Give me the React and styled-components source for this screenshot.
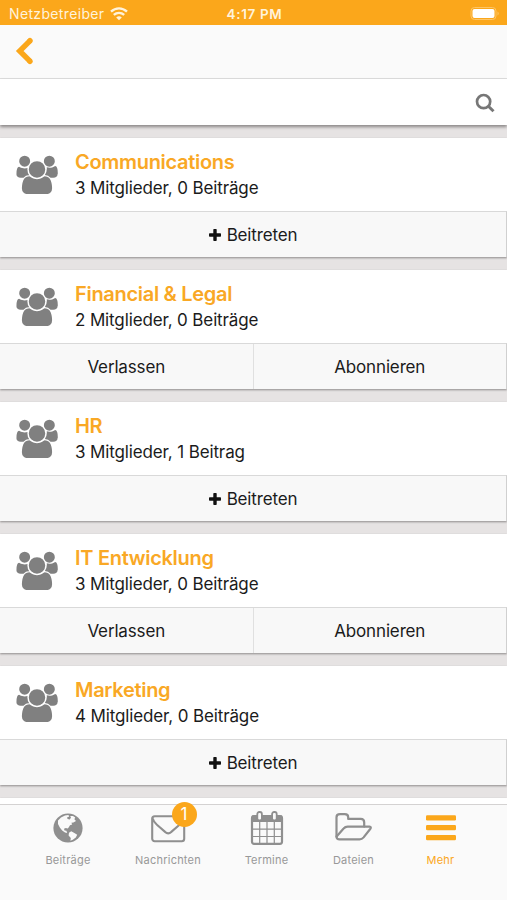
import React from "react";
import styled, { createGlobalStyle } from "styled-components";

const GlobalStyle = createGlobalStyle`
  * {
    box-sizing: border-box;
  }

  body {
    margin: 0;
    font-family: Inter, sans-serif;
    color: #1b1b1b;
    background-color: #e8e6e6;
  }
`;

const Screen = styled.div`
  width: 507px;
  height: 900px;
  display: flex;
  flex-direction: column;
  overflow: hidden;
  background-color: #e6e3e3;
`;

const StatusBar = styled.div`
  height: 25px;
  flex-shrink: 0;
  display: grid;
  grid-template-columns: 1fr auto 1fr;
  align-items: center;
  padding: 2px 7px 0 9px;
  color: #fff3dc;
  background-color: #fba71b;
`;

const Carrier = styled.div`
  display: flex;
  align-items: center;
  gap: 6px;
  font-size: 14px;
  letter-spacing: 0.35px;
`;

const Clock = styled.div`
  font-size: 13.5px;
  font-weight: 600;
  letter-spacing: 0.65px;
`;

const BatteryBox = styled.div`
  display: flex;
  justify-content: flex-end;
`;

const Header = styled.header`
  height: 54px;
  flex-shrink: 0;
  padding: 12px 0 0 15px;
  border-bottom: 1px solid #dedede;
  background-color: #fafafa;
`;

const SearchBar = styled.div`
  height: 46px;
  flex-shrink: 0;
  display: flex;
  justify-content: flex-end;
  align-items: center;
  padding: 1px 12px 0 0;
  background-color: #fff;
  box-shadow: 0 2px 3px #8a8686;
`;

const GroupList = styled.main`
  flex: 1;
  min-height: 0;
  display: flex;
  flex-direction: column;
  gap: 13px;
  padding-top: 13px;
  overflow: hidden;
`;

const Card = styled.section`
  height: 119px;
  flex-shrink: 0;
  display: flex;
  flex-direction: column;
  background-color: #fff;
  box-shadow: 0 1px 2px #8f8b8b;
`;

const CardBody = styled.div`
  height: 73px;
  display: flex;
  padding: 16px 0 0 16px;
`;

const CardText = styled.div`
  padding: 1px 0 0 17px;
`;

const GroupName = styled.h2`
  margin: -6px 0 0;
  font-size: 20px;
  line-height: 26px;
  font-weight: 600;
  letter-spacing: -0.3px;
  color: #f9a825;
`;

const Info = styled.p`
  margin: 0;
  font-size: 17px;
  line-height: 26px;
  letter-spacing: -0.13px;
`;

const Actions = styled.div`
  flex: 1;
  display: flex;
  border-top: 1px solid #d9d9d9;
  border-right: 1px solid #d0d0d0;
  background-color: #f8f8f8;
`;

const Action = styled.button`
  flex: 1;
  display: flex;
  justify-content: center;
  align-items: center;
  gap: 6px;
  padding: 0;
  border: none;
  font-family: inherit;
  font-size: 17px;
  letter-spacing: -0.15px;
  color: #1b1b1b;
  background: none;

  & + & {
    border-left: 1px solid #e0e0e0;
  }
`;

const TabBar = styled.nav`
  height: 96px;
  flex-shrink: 0;
  display: grid;
  grid-template-columns: 100px 100px 97px 77px 97px;
  padding-left: 18px;
  border-top: 1px solid #d4d2d2;
  background-color: #fafafa;
`;

const Tab = styled.div`
  display: flex;
  flex-direction: column;
  align-items: center;
  padding-top: 4px;
  font-size: 11px;
  letter-spacing: 0.22px;
  color: ${(props) => (props.$active ? "#fba71b" : "#989898")};
`;

const TabIcon = styled.div`
  position: relative;
  height: 38px;
  margin-bottom: 6px;
  display: flex;
  align-items: center;
`;

const Badge = styled.span`
  position: absolute;
  top: -7px;
  left: 21px;
  width: 25px;
  height: 25px;
  border-radius: 50%;
  font-size: 17px;
  line-height: 25px;
  text-align: center;
  letter-spacing: 0;
  color: #fff;
  background-color: #fba71b;
`;

const WifiIcon = () => (
  <svg width="18" height="14" viewBox="0 0 18 14" fill="none" stroke="#fff3dc" strokeWidth="2.4">
    <path d="M1 4.6C5.7 0.3 12.3 0.3 17 4.6" />
    <path d="M3.8 7.9C6.9 5.2 11.1 5.2 14.2 7.9" />
    <path d="M9 13.2L6.2 10.4Q9 8.3 11.8 10.4Z" fill="#fff3dc" stroke="none" />
  </svg>
);

const BatteryIcon = () => (
  <svg width="30" height="14" viewBox="0 0 30 14">
    <rect x="1" y="0.5" width="25" height="12" rx="3.5" fill="none" stroke="#fdc566" strokeWidth="1" />
    <rect x="2.5" y="2" width="22" height="9" rx="2" fill="#fff" />
    <path d="M27.5 4.5v4q1.2-0.6 1.2-2t-1.2-2z" fill="#fdc566" />
  </svg>
);

const BackIcon = () => (
  <svg width="20" height="28" viewBox="0 0 20 28" fill="none" stroke="#fba71b" strokeWidth="5.4">
    <path d="M15.4 3.3L4.7 14L15.4 24.7" strokeLinejoin="miter" />
    <path d="M14.8 3.9L15 3.7M14.8 24.1L15 24.3" strokeLinecap="round" />
  </svg>
);

const SearchIcon = () => (
  <svg width="20" height="20" viewBox="0 0 20 20" fill="none" stroke="#777" strokeWidth="2.7">
    <circle cx="8.6" cy="8.6" r="6.6" />
    <path d="M13.4 13.3L18.5 18.3" strokeWidth="3" />
  </svg>
);

const GroupIcon = () => (
  <svg width="42" height="40" viewBox="-20 -80 1960 1867" fill="#808080">
    <path d="M593 896q-162 5-265 128h-134q-82 0-138-40.5t-56-118.5q0-353 124-353 6 0 43.5 21t97.5 42.5 119 21.5q67 0 133-23-5 37-5 66 0 159 93 287zm1071 637q0 120-73 189.5t-194 69.5h-874q-121 0-194-69.5t-73-189.5q0-53 3.5-103.5t14-109 26.5-108.5 43-97.5 62-81 85.5-53.5 111.5-20q10 0 43 21.5t73 48 107 48 135 21.5 135-21.5 107-48 73-48 43-21.5q61 0 111.5 20t85.5 53.5 62 81 43 97.5 26.5 108.5 14 109 3.5 103.5zm-1024-1277q0 106-75 181t-181 75-181-75-75-181 75-181 181-75 181 75 75 181zm704 384q0 159-112.5 271.5t-271.5 112.5-271.5-112.5-112.5-271.5 112.5-271.5 271.5-112.5 271.5 112.5 112.5 271.5zm576 225q0 78-56 118.5t-138 40.5h-134q-103-123-265-128 93-128 93-287 0-29-5-66 66 23 133 23 59 0 119-21.5t97.5-42.5 43.5-21q124 0 124 353zm-128-609q0 106-75 181t-181 75-181-75-75-181 75-181 181-75 181 75 75 181z" />
  </svg>
);

const PlusIcon = () => (
  <svg width="12" height="12" viewBox="0 0 12 12" fill="#111">
    <rect y="4.3" width="12" height="3.4" rx="0.7" />
    <rect x="4.3" width="3.4" height="12" rx="0.7" />
  </svg>
);

const GlobeIcon = () => (
  <svg width="30" height="30" viewBox="0 0 30 30">
    <circle cx="15" cy="15" r="14.6" fill="#8f8f8f" />
    <g fill="#fafafa">
      <path d="M5 7.4L8 4.4L12 2.4L15.4 2L16.2 3.4L14 4.4L14.6 6L16.8 6.6L18 4.6L17.2 3L20 3L22.2 4.6L21.4 6.2L23 8L20.4 9.4L18.4 9.8L19.2 11.4L17 12.2L15.8 14.2L14.8 15.6L12.8 15L11 15.8L11.5 17.4L13.4 17.7L14.2 20L12 19.4L9.2 17.4L6.8 14.4L5 11Z" />
      <path d="M16 19.8L18.2 18.3L21.4 20L24.2 21.8L22.8 24.4L19.8 26.7L17.4 27.8L17.8 25L15.6 22.4Z" />
    </g>
  </svg>
);

const MailIcon = () => (
  <svg width="35" height="29" viewBox="0.6 0 35 29" fill="none" stroke="#8f8f8f" strokeWidth="2.1" strokeLinejoin="round">
    <rect x="1.8" y="2.3" width="32" height="25" rx="2.5" />
    <path d="M2.3 4.5Q3.3 8.2 6.5 10.8L14.7 17.9Q17.8 20.8 20.9 17.9L29.1 10.8Q32.3 8.2 33.3 4.5" />
  </svg>
);

const CalendarIcon = () => (
  <svg width="34" height="36" viewBox="0 0 34 36" fill="none" stroke="#8f8f8f">
    <rect x="2" y="6.2" width="30" height="27.6" rx="2" strokeWidth="2.2" />
    <path d="M2 5.5H32V12H2Z" fill="#8f8f8f" stroke="none" />
    <path d="M9.7 12V34M17 12V34M24.3 12V34M2 19.2H32M2 26.5H32" strokeWidth="1.2" />
    <rect x="7.3" y="2" width="4.6" height="8.4" rx="2" fill="#fafafa" strokeWidth="1.8" />
    <rect x="22.1" y="2" width="4.6" height="8.4" rx="2" fill="#fafafa" strokeWidth="1.8" />
  </svg>
);

const FolderIcon = () => (
  <svg width="38" height="30" viewBox="0.8 0.8 38 30" fill="none" stroke="#8f8f8f" strokeWidth="2.2" strokeLinejoin="round" strokeLinecap="round">
    <path d="M2.3 24.5V5Q2.3 2 5.8 2H10.5Q14 2 14 5V6.7H26.5Q30 6.7 30 10.2V14.4" />
    <path d="M2.4 24.2L9.4 16.3Q11 14.4 13.5 14.4H35.2Q37.6 14.6 36 16.8L29.4 25.2Q27.7 27.2 25.3 27.2H5.4Q2.3 27.2 2.3 24.2" />
  </svg>
);

const MenuIcon = () => (
  <svg width="30" height="26" viewBox="0 0 30 26" fill="#fba71b">
    <rect y="0.3" width="30" height="5.2" rx="1.2" />
    <rect y="10.1" width="30" height="5.2" rx="1.2" />
    <rect y="20" width="30" height="5.2" rx="1.2" />
  </svg>
);

const groups = [
  { name: "Communications", info: "3 Mitglieder, 0 Beiträge", joined: false },
  { name: "Financial & Legal", info: "2 Mitglieder, 0 Beiträge", joined: true },
  { name: "HR", info: "3 Mitglieder, 1 Beitrag", joined: false },
  { name: "IT Entwicklung", info: "3 Mitglieder, 0 Beiträge", joined: true },
  { name: "Marketing", info: "4 Mitglieder, 0 Beiträge", joined: false },
];

const tabs = [
  { label: "Beiträge", icon: <GlobeIcon /> },
  { label: "Nachrichten", icon: <MailIcon />, badge: 1 },
  { label: "Termine", icon: <CalendarIcon /> },
  { label: "Dateien", icon: <FolderIcon /> },
  { label: "Mehr", icon: <MenuIcon />, active: true },
];

export default function App() {
  return (
    <>
      <GlobalStyle />
      <Screen>
        <StatusBar>
          <Carrier>Netzbetreiber <WifiIcon /></Carrier>
          <Clock>4:17 PM</Clock>
          <BatteryBox><BatteryIcon /></BatteryBox>
        </StatusBar>
        <Header>
          <BackIcon />
        </Header>
        <SearchBar>
          <SearchIcon />
        </SearchBar>
        <GroupList>
          {groups.map((group) => (
            <Card key={group.name}>
              <CardBody>
                <GroupIcon />
                <CardText>
                  <GroupName>{group.name}</GroupName>
                  <Info>{group.info}</Info>
                </CardText>
              </CardBody>
              {group.joined ? (
                <Actions>
                  <Action>Verlassen</Action>
                  <Action>Abonnieren</Action>
                </Actions>
              ) : (
                <Actions>
                  <Action><PlusIcon /> Beitreten</Action>
                </Actions>
              )}
            </Card>
          ))}
          {/* next group, only its top edge is visible above the tabs */}
          <Card />
        </GroupList>
        <TabBar>
          {tabs.map((tab) => (
            <Tab key={tab.label} $active={tab.active}>
              <TabIcon>
                {tab.icon}
                {tab.badge && <Badge>{tab.badge}</Badge>}
              </TabIcon>
              {tab.label}
            </Tab>
          ))}
        </TabBar>
      </Screen>
    </>
  );
}
